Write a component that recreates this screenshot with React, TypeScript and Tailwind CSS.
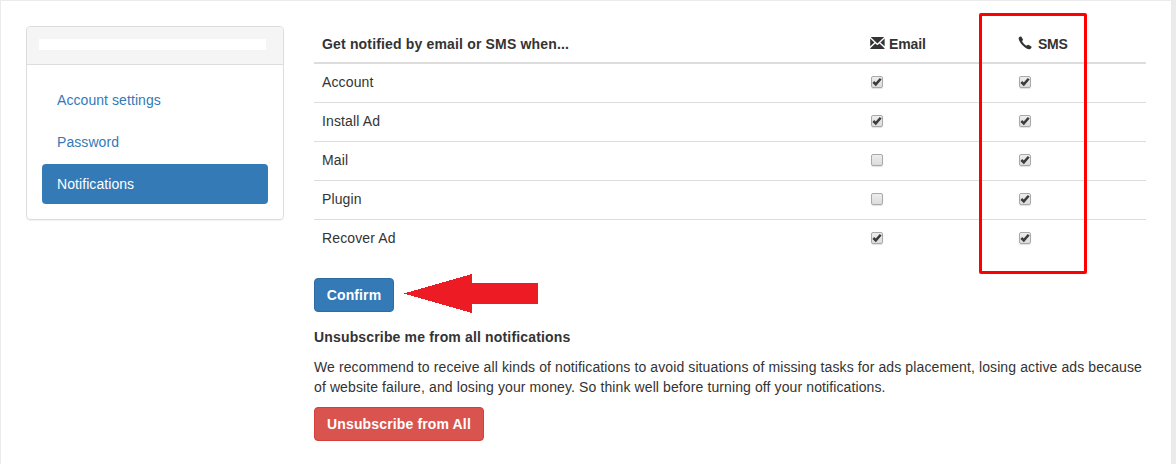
const navItems = [
  { label: "Account settings", active: false },
  { label: "Password", active: false },
  { label: "Notifications", active: true },
];

const rows = [
  { label: "Account", email: true, sms: true },
  { label: "Install Ad", email: true, sms: true },
  { label: "Mail", email: false, sms: true },
  { label: "Plugin", email: false, sms: true },
  { label: "Recover Ad", email: true, sms: true },
];

function EnvelopeIcon() {
  return (
    <svg width="15" height="12" viewBox="0 0 15 12" fill="#333" className="mr-1 -mt-0.5">
      <path d="M0.6 0H14.2L7.4 6.4Z" />
      <path d="M0.2 1.6L4.4 5.5L0.2 9.3Z" />
      <path d="M14.6 1.6L10.4 5.5L14.6 9.3Z" />
      <path d="M0.3 11.2L5.3 6.5L7.4 8.3L9.5 6.5L14.5 11.2V12H0.3Z" />
    </svg>
  );
}

function PhoneIcon() {
  return (
    <svg width="14" height="14" viewBox="0 0 14 14" fill="#333" className="mr-1.5 -mt-0.5">
      <path d="M0.9 1.6C1.6 0.7 2.9 0.2 3.4 0.8L5 3.5C5.3 4.1 4.3 4.6 4.2 5.1C4 6 7.4 9.5 8.6 9.5C9.2 9.5 9.6 8.4 10.3 8.7L13.3 10.5C14 11 13.2 12.3 12.3 12.9C10.9 13.9 7.4 12.2 4.8 9.5C2 6.8 -0.1 3.1 0.9 1.6Z" />
    </svg>
  );
}

function Checkbox({ checked }: { checked: boolean }) {
  return (
    <div
      role="checkbox"
      aria-checked={checked}
      className="w-3 h-3 ml-px rounded-[2px] border border-[#a9a9a9] bg-linear-to-b from-[#ededed] to-[#dcdcdc] shadow-[0_1px_1px_rgba(0,0,0,0.12)]"
    >
      {checked && (
        <svg width="10" height="10" viewBox="0 0 10 10" fill="none" stroke="#3c3c3c" strokeWidth="2.5">
          <path d="M1.3 5L3.8 7.4L8.7 1.7" />
        </svg>
      )}
    </div>
  );
}

function Sidebar() {
  return (
    <div className="w-[258px] h-[194px] shrink-0 rounded border border-[#ddd] shadow-[0_1px_1px_rgba(0,0,0,0.05)]">
      <div className="h-[38px] pt-3 pl-3 rounded-t-[3px] bg-[#f5f5f5] border-b border-[#ddd]">
        <div className="w-[227px] h-[11px] bg-white" />
      </div>
      <div className="flex flex-col gap-0.5 p-[15px] tracking-[0.07px]">
        {navItems.map((item) => (
          <a
            key={item.label}
            className={
              item.active
                ? "h-10 px-[15px] py-2.5 rounded bg-[#337ab7] text-white"
                : "h-10 px-[15px] py-2.5 rounded text-[#337ab7]"
            }
          >
            {item.label}
          </a>
        ))}
      </div>
    </div>
  );
}

function NotificationTable() {
  return (
    <div>
      <div className="grid grid-cols-[548px_148px_136px] h-[38px] pt-2 border-b-2 border-[#ddd] font-bold">
        <div className="pl-2 tracking-[0.165px]">Get notified by email or SMS when...</div>
        <div className="flex items-center h-5 pl-2">
          <EnvelopeIcon />
          <span className="tracking-[-0.1px]">Email</span>
        </div>
        <div className="flex items-center h-5 pl-2">
          <PhoneIcon />
          <span className="tracking-[-0.25px]">SMS</span>
        </div>
      </div>
      <div className="divide-y divide-[#ddd]">
        {rows.map((row) => (
          <div key={row.label} className="grid grid-cols-[548px_148px_136px] h-[39px] pt-2">
            <div className="pl-2 tracking-[0.13px]">{row.label}</div>
            <div className="pl-2 pt-1">
              <Checkbox checked={row.email} />
            </div>
            <div className="pl-2 pt-1">
              <Checkbox checked={row.sms} />
            </div>
          </div>
        ))}
      </div>
    </div>
  );
}

export default function App() {
  return (
    <div className="relative w-[1176px] h-[464px] overflow-hidden bg-white border-t border-l border-r-[5px] border-[#ebebeb] font-['Liberation_Sans',Arial,sans-serif] text-[14px] leading-5 text-[#333]">
      <div className="flex gap-[30px] pt-[25px] pl-[25px]">
        <Sidebar />
        <div className="w-[832px]">
          <NotificationTable />
          <button className="block w-20 h-[34px] mt-[19px] rounded border border-[#2e6da4] bg-[#337ab7] text-white font-bold tracking-[0.12px]">
            Confirm
          </button>
          <h4 className="mt-[15px] font-bold tracking-[0.16px]">Unsubscribe me from all notifications</h4>
          <p className="mt-2.5 whitespace-nowrap tracking-[0.108px]">
            We recommend to receive all kinds of notifications to avoid situations of missing tasks for ads placement, losing active ads because
            <br />
            of website failure, and losing your money. So think well before turning off your notifications.
          </p>
          <button className="block w-[170px] h-[34px] mt-2.5 rounded border border-[#d43f3a] bg-[#d9534f] text-white font-bold tracking-[0.14px]">
            Unsubscribe from All
          </button>
        </div>
      </div>

      {/* highlight around the SMS column */}
      <div className="absolute left-[978px] top-3 w-[108px] h-[261px] rounded-[2px] border-3 border-[#ff0000]" />

      {/* arrow pointing at Confirm */}
      <svg className="absolute left-[402px] top-[272px]" width="136" height="42" viewBox="0 0 136 42">
        <path d="M1 20.5L69 1V10H135V31H69V40Z" fill="#ed1c24" shapeRendering="crispEdges" />
      </svg>
    </div>
  );
}
